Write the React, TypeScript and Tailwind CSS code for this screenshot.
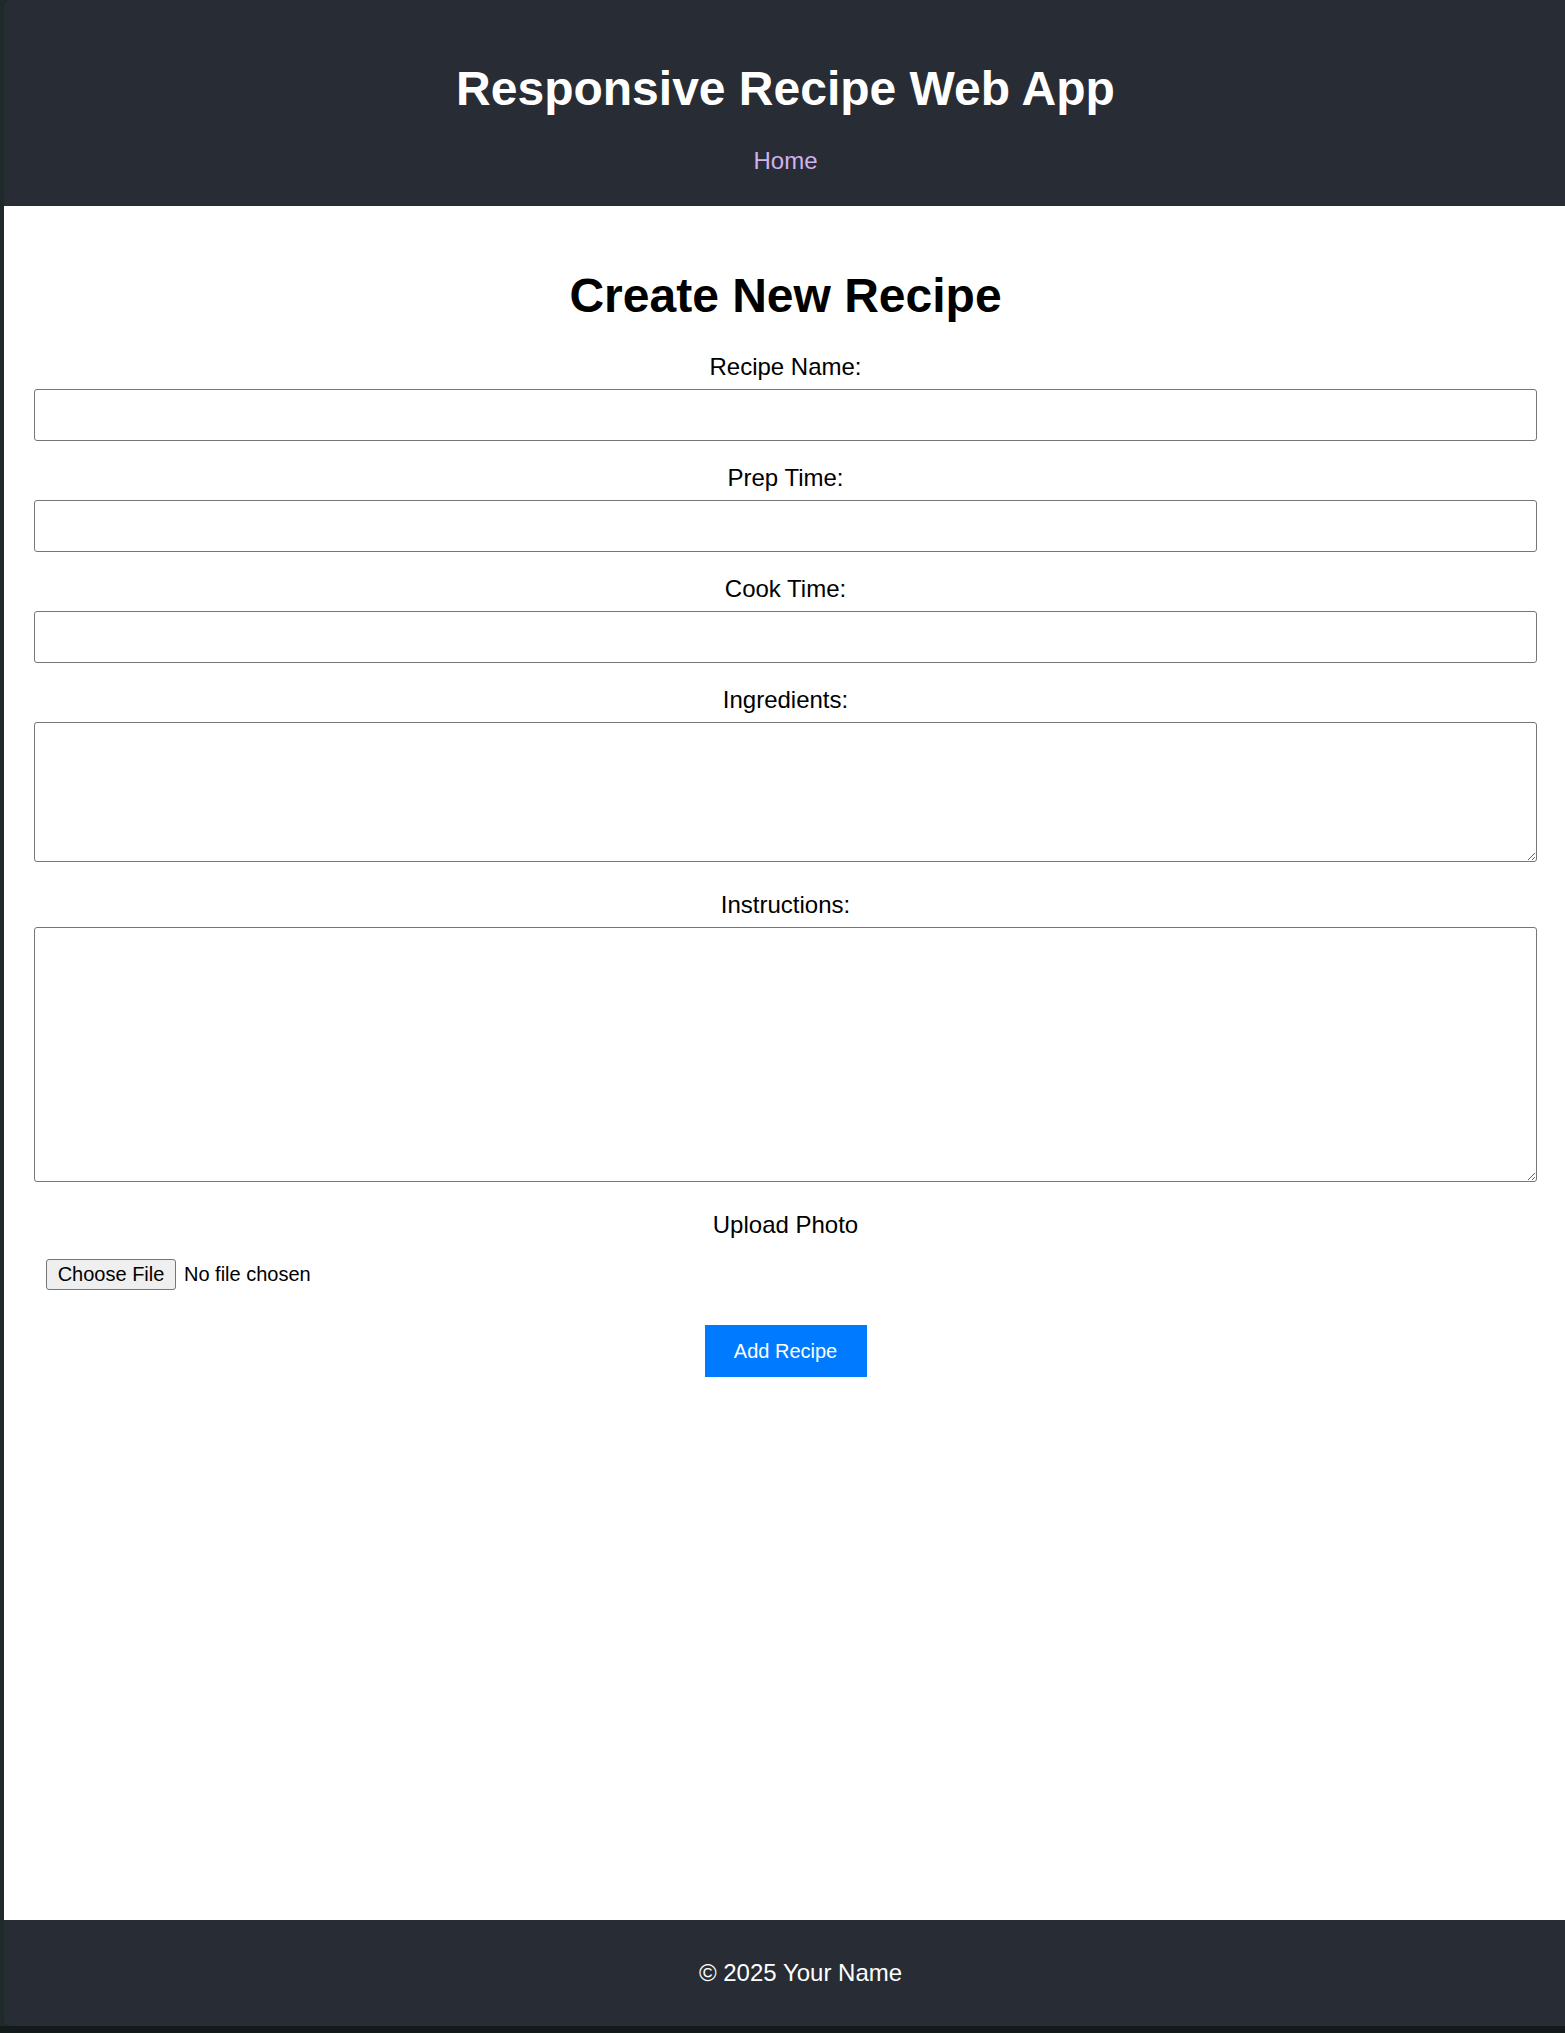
import React from "react";

function Field({ label, children }: { label: string; children: React.ReactNode }) {
  return (
    <div>
      <label className="block text-center text-[24px] leading-[28px] text-black">{label}</label>
      {children}
    </div>
  );
}

export default function App() {
  return (
    <div className="min-h-screen flex flex-col bg-[#1f2929] font-['Liberation_Sans',Arial,sans-serif]">
      <div className="flex-1 flex flex-col ml-[4px]">
        <header className="bg-[#282c34] text-center pt-[61px] pb-[31px] pl-[2px] rounded-tl-[6px]">
          <h1 className="text-[48px] leading-[55px] font-bold text-white">Responsive Recipe Web App</h1>
          <nav className="mt-[31px] h-[28px]">
            <a href="#" className="inline-block text-[24px] leading-[28px] text-[#d0b2ee]">
              Home
            </a>
          </nav>
        </header>
        <main className="flex-1 bg-white pt-[62px] pl-[30px] pr-[28px]">
          <h2 className="text-center text-[48px] leading-[55px] font-bold text-black">Create New Recipe</h2>
          <form className="mt-[30px]" onSubmit={(e) => e.preventDefault()}>
            <Field label="Recipe Name:">
              <input
                type="text"
                className="block mt-[8px] mb-[23px] w-full h-[52px] border border-[#767676] rounded-[3px] px-3 text-[20px] outline-none"
              />
            </Field>
            <Field label="Prep Time:">
              <input
                type="text"
                className="block mt-[8px] mb-[23px] w-full h-[52px] border border-[#767676] rounded-[3px] px-3 text-[20px] outline-none"
              />
            </Field>
            <Field label="Cook Time:">
              <input
                type="text"
                className="block mt-[8px] mb-[23px] w-full h-[52px] border border-[#767676] rounded-[3px] px-3 text-[20px] outline-none"
              />
            </Field>
            <Field label="Ingredients:">
              <textarea className="block mt-[8px] mb-[29px] w-full h-[140px] border border-[#767676] rounded-[3px] p-3 text-[20px] outline-none" />
            </Field>
            <Field label="Instructions:">
              <textarea className="block mt-[8px] mb-[29px] w-full h-[255px] border border-[#767676] rounded-[3px] p-3 text-[20px] outline-none" />
            </Field>
            <Field label="Upload Photo">
              <div className="mt-[8px] mb-[23px] p-[12px] h-[55px] flex items-center">
                <label className="w-[130px] h-[31px] flex items-center justify-center bg-[#efefef] border border-[#767676] rounded-[3px] text-[20px] leading-[23px] text-black cursor-default">
                  Choose File
                  <input type="file" className="hidden" />
                </label>
                <span className="ml-[8px] text-[20px] leading-[23px] text-black">No file chosen</span>
              </div>
            </Field>
            <button
              type="submit"
              className="block mx-auto w-[162px] h-[52px] bg-[#007bff] text-white text-[20px] leading-[23px]"
            >
              Add Recipe
            </button>
          </form>
        </main>
        <footer className="bg-[#282c34] text-white text-center text-[24px] leading-[28px] py-[39px] pl-[32px] rounded-bl-[6px]">
          © 2025 Your Name
        </footer>
      </div>
      <div className="h-[7px] bg-[#131a1a]" />
    </div>
  );
}
